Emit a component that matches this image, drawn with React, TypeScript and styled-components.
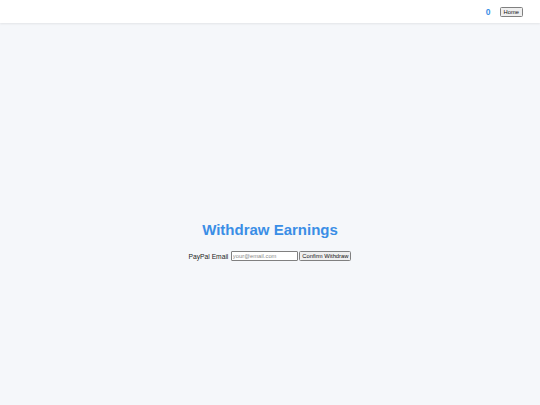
import React from "react";
import styled, { createGlobalStyle } from "styled-components";

const GlobalStyle = createGlobalStyle`
  html, body {
    margin: 0;
    padding: 0;
    background: #f5f7fa;
    font-family: "Liberation Sans", Arial, sans-serif;
  }
`;

export default function App() {
  return (
    <>
      <GlobalStyle />
      <Page>
        <Header>
          <Balance>0</Balance>
          <NavButton>Home</NavButton>
        </Header>
        <Main>
          <Title>Withdraw Earnings</Title>
          <Form onSubmit={(e) => e.preventDefault()}>
            <Label htmlFor="paypal">PayPal Email</Label>
            <EmailInput id="paypal" type="email" placeholder="your@email.com" />
            <SubmitButton type="submit">Confirm Withdraw</SubmitButton>
          </Form>
        </Main>
      </Page>
    </>
  );
}

const Page = styled.div`
  min-height: 405px;
  display: flex;
  flex-direction: column;
  background: #f5f7fa;
`;

const Header = styled.header`
  height: 23px;
  box-sizing: border-box;
  background: #fff;
  box-shadow: 0 1px 2px rgba(0, 0, 0, 0.08);
  display: flex;
  align-items: center;
  justify-content: flex-end;
  gap: 9px;
  padding: 0 17px 0 0;
`;

const Balance = styled.span`
  color: #3a8ee6;
  font-weight: bold;
  font-size: 8.5px;
`;

const NavButton = styled.button`
  font-family: "Liberation Sans", Arial, sans-serif;
  font-size: 5.8px;
  height: 10px;
  padding: 0 3px;
  background: #efefef;
  border: 1px solid #808080;
  border-radius: 1.5px;
  color: #111;
`;

const Main = styled.main`
  flex: 1;
  display: flex;
  flex-direction: column;
  align-items: center;
  justify-content: center;
  padding-top: 54px;
`;

const Title = styled.h1`
  margin: 0 0 13px;
  font-size: 15px;
  font-weight: bold;
  color: #3a8ee6;
`;

const Form = styled.form`
  display: flex;
  align-items: center;
  gap: 1.5px;
`;

const Label = styled.label`
  font-size: 6.7px;
  color: #222;
  margin-right: 1px;
`;

const EmailInput = styled.input`
  font-family: "Liberation Sans", Arial, sans-serif;
  width: 67px;
  height: 10px;
  box-sizing: border-box;
  font-size: 5.8px;
  padding: 0 1px;
  border: 1px solid #808080;
  border-radius: 1px;
  background: #fff;

  &::placeholder {
    color: #8a8a8a;
  }
`;

const SubmitButton = styled.button`
  font-family: "Liberation Sans", Arial, sans-serif;
  font-size: 5.8px;
  height: 10px;
  padding: 0 2px;
  background: #efefef;
  border: 1px solid #808080;
  border-radius: 1.5px;
  color: #111;
`;
